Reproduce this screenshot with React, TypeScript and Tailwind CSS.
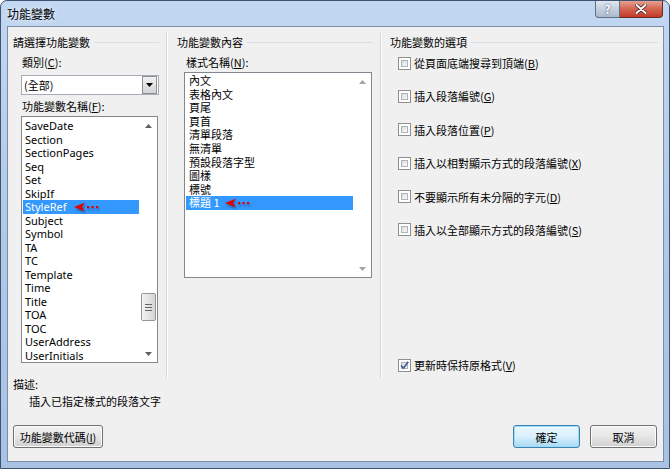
import React from "react";

const fields = [
  "SaveDate",
  "Section",
  "SectionPages",
  "Seq",
  "Set",
  "SkipIf",
  "StyleRef",
  "Subject",
  "Symbol",
  "TA",
  "TC",
  "Template",
  "Time",
  "Title",
  "TOA",
  "TOC",
  "UserAddress",
  "UserInitials",
];

const styleNames = ["內文", "表格內文", "頁尾", "頁首", "清單段落", "無清單", "預設段落字型", "圖樣", "標號", "標題 1"];

const options = [
  { label: "從頁面底端搜尋到頂端", key: "B" },
  { label: "插入段落編號", key: "G" },
  { label: "插入段落位置", key: "P" },
  { label: "插入以相對顯示方式的段落編號", key: "X" },
  { label: "不要顯示所有未分隔的字元", key: "D" },
  { label: "插入以全部顯示方式的段落編號", key: "S" },
];

function RedArrow() {
  return (
    <svg width="26" height="12" viewBox="0 0 26 12" className="drop-shadow-[1px_2px_1px_rgba(0,0,0,0.35)]">
      <path d="M0 6 L11 1.5 L8 6 L11 10.5 Z" fill="#e50000" />
      <rect x="13" y="5" width="2.2" height="2.2" fill="#e50000" />
      <rect x="17.5" y="5" width="2.2" height="2.2" fill="#e50000" />
      <rect x="22" y="5" width="2.2" height="2.2" fill="#e50000" />
    </svg>
  );
}

function ScrollArrow({ up, color }: { up?: boolean; color: string }) {
  return (
    <svg width="7" height="4" viewBox="0 0 7 4">
      <path d={up ? "M0 4 L3.5 0 L7 4 Z" : "M0 0 L7 0 L3.5 4 Z"} fill={color} />
    </svg>
  );
}

function Checkbox({ checked }: { checked?: boolean }) {
  return (
    <div className="w-[13px] h-[13px] border border-[#8e8f8f] bg-white p-[2px] shrink-0">
      <div className="w-full h-full border border-[#aeb3b9] bg-linear-to-br from-[#dcdcdc] to-[#fafafa] relative">
        {checked && (
          <svg width="11" height="11" viewBox="0 0 11 11" className="absolute -left-[3px] -top-[3px]">
            <path d="M2 5.5 L4.5 8.2 L9.2 1.8" fill="none" stroke="#4a5f97" strokeWidth="1.8" />
          </svg>
        )}
      </div>
    </div>
  );
}

function Button({ children, primary, width }: { children: React.ReactNode; primary?: boolean; width: string }) {
  return (
    <button
      className={
        primary
          ? "h-[23px] w-[67px] rounded-[3px] border border-[#3c7fb1] bg-linear-to-b from-[#eaf6fd] via-[#d9f0fc] to-[#a7d9f5] shadow-[inset_0_0_0_1px_#9edcf8] text-[11px] leading-[14px]"
          : width === "wide"
          ? "h-[23px] w-[90px] rounded-[3px] border border-[#707070] bg-linear-to-b from-[#f2f2f2] via-[#e6e6e6] to-[#cfcfcf] shadow-[inset_0_0_0_1px_#fbfbfb] text-[11px] leading-[14px]"
          : "h-[23px] w-[67px] rounded-[3px] border border-[#707070] bg-linear-to-b from-[#f2f2f2] via-[#e6e6e6] to-[#cfcfcf] shadow-[inset_0_0_0_1px_#fbfbfb] text-[11px] leading-[14px]"
      }
    >
      {children}
    </button>
  );
}

function GroupHeader({ title, pad }: { title: string; pad: string }) {
  return (
    <div className={"flex items-center h-[14px] " + pad}>
      <span className="leading-[14px] whitespace-nowrap">{title}</span>
      <div className="flex-1 h-px bg-[#d5dfe5] ml-[4px]" />
    </div>
  );
}

export default function App() {
  return (
    <div className="w-[670px] h-[469px] bg-white font-['Noto_Sans_CJK_TC',sans-serif] text-[11px] text-black overflow-hidden">
      <div className="w-full h-full flex flex-col rounded-t-[7px] border border-[#3f5371] bg-linear-to-b from-[#c2d7f1] via-[#b0c9e9] to-[#a9c2e4]">
        {/* Title bar */}
        <div className="h-[25px] shrink-0 flex items-start">
          <div className="pl-[6px] pt-[5px] text-[12px] leading-[16px] [text-shadow:0_0_6px_#ffffff]">功能變數</div>
          <div className="ml-auto mr-[6px] flex">
            <div className="w-[25px] h-[17px] rounded-bl-[4px] border border-t-0 border-[#5f6f86] bg-linear-to-b from-[#dfe7f1] to-[#aab9cd] flex items-center justify-center text-white font-bold text-[12px] leading-none [text-shadow:0_0_2px_#34435a]">
              ?
            </div>
            <div className="w-[43px] h-[17px] rounded-br-[4px] border border-l-0 border-t-0 border-[#6b2a24] bg-linear-to-b from-[#e6a192] via-[#d3634f] to-[#c23b25] flex items-center justify-center">
              <svg width="12" height="10" viewBox="0 0 12 10">
                <path d="M1.5 1 L10.5 9 M10.5 1 L1.5 9" stroke="#3b1a17" strokeWidth="3.4" strokeLinecap="round" />
                <path d="M1.5 1 L10.5 9 M10.5 1 L1.5 9" stroke="#ffffff" strokeWidth="2" strokeLinecap="round" />
              </svg>
            </div>
          </div>
        </div>

        {/* Client area */}
        <div className="ml-[6px] mr-[5px] mb-[6px] flex-1 border border-[#7c8ea8] bg-[#f0f0f0] flex flex-col">
          <div className="pt-[6px] flex h-[351px]">
            {/* Left column */}
            <div className="w-[158px] pt-[2px] flex flex-col">
              <GroupHeader title="請選擇功能變數" pad="pl-[5px] pr-[7px]" />
              <div className="pl-[14px] mt-[6px] leading-[14px]">
                類別(<span className="underline">C</span>):
              </div>
              <div className="ml-[13px] mt-[6px] w-[138px] h-[20px] border border-[#a5acb5] bg-white flex items-center">
                <span className="pl-[2px] flex-1 leading-[14px]">(全部)</span>
                <div className="w-[15px] h-[18px] mr-px border border-[#8e8f8f] bg-linear-to-b from-[#f2f2f2] to-[#d4d4d4] flex items-center justify-center">
                  <ScrollArrow color="#000000" />
                </div>
              </div>
              <div className="pl-[14px] mt-[4px] leading-[14px]">
                功能變數名稱(<span className="underline">F</span>):
              </div>
              <div className="ml-[13px] mt-[3px] w-[137px] h-[247px] border border-[#828790] bg-white flex">
                <div className="flex-1 pt-[2px] px-px font-['Noto_Sans','Noto_Sans_CJK_TC',sans-serif]">
                  {fields.map((f, i) => (
                    <div
                      key={f}
                      className={
                        i === 6
                          ? "relative h-[13.5px] leading-[13.5px] pl-[2px] bg-[#3399ff] text-white"
                          : "relative h-[13.5px] leading-[13.5px] pl-[2px]"
                      }
                    >
                      {f}
                      {i === 6 && (
                        <div className="absolute left-[51px] top-[1px]">
                          <RedArrow />
                        </div>
                      )}
                    </div>
                  ))}
                </div>
                <div className="w-[17px] flex flex-col">
                  <div className="h-[17px] flex items-center justify-center">
                    <ScrollArrow up color="#606060" />
                  </div>
                  <div className="flex-1 flex flex-col px-px">
                    <div className="h-[159px]" />
                    <div className="h-[28px] rounded-[2px] border border-[#959595] bg-linear-to-r from-[#f3f3f3] to-[#d5d5d5] flex flex-col items-center justify-center gap-[2px]">
                      <div className="w-[7px] h-px bg-[#666666]" />
                      <div className="w-[7px] h-px bg-[#666666]" />
                      <div className="w-[7px] h-px bg-[#666666]" />
                    </div>
                  </div>
                  <div className="h-[17px] flex items-center justify-center">
                    <ScrollArrow color="#606060" />
                  </div>
                </div>
              </div>
            </div>

            <div className="w-px h-[345px] bg-[#d5d5d5]" />
            <div className="w-px h-[345px] bg-white" />

            {/* Middle column */}
            <div className="w-[212px] pt-[2px] flex flex-col">
              <GroupHeader title="功能變數內容" pad="pl-[9px] pr-[7px]" />
              <div className="pl-[18px] mt-[6px] leading-[14px]">
                樣式名稱(<span className="underline">N</span>):
              </div>
              <div className="ml-[16px] mt-[3px] w-[188px] h-[206px] border border-[#828790] bg-white flex">
                <div className="flex-1 pt-px px-px">
                  {styleNames.map((s, i) => (
                    <div
                      key={s}
                      className={
                        i === 9
                          ? "relative h-[13.6px] leading-[13.6px] pl-[3px] bg-[#3399ff] text-white"
                          : "relative h-[13.6px] leading-[13.6px] pl-[3px]"
                      }
                    >
                      {s}
                      {i === 9 && (
                        <div className="absolute left-[39px] top-[1px]">
                          <RedArrow />
                        </div>
                      )}
                    </div>
                  ))}
                </div>
                <div className="w-[17px] flex flex-col justify-between">
                  <div className="h-[17px] flex items-center justify-center">
                    <ScrollArrow up color="#a3a3a3" />
                  </div>
                  <div className="h-[17px] flex items-center justify-center">
                    <ScrollArrow color="#a3a3a3" />
                  </div>
                </div>
              </div>
            </div>

            <div className="w-px h-[345px] bg-[#d5d5d5]" />
            <div className="w-px h-[345px] bg-white" />

            {/* Right column */}
            <div className="flex-1 pt-[2px] h-[345px] flex flex-col">
              <GroupHeader title="功能變數的選項" pad="pl-[8px] pr-[5px]" />
              <div className="pl-[16px] mt-[7px] flex flex-col gap-[19.4px]">
                {options.map((o) => (
                  <div key={o.key} className="flex items-center gap-[3px] h-[14px]">
                    <Checkbox />
                    <span className="leading-[14px]">
                      {o.label}(<span className="underline">{o.key}</span>)
                    </span>
                  </div>
                ))}
              </div>
              <div className="mt-auto mb-[6px] pl-[16px] flex items-center gap-[3px] h-[14px]">
                <Checkbox checked />
                <span className="leading-[14px]">
                  更新時保持原格式(<span className="underline">V</span>)
                </span>
              </div>
            </div>
          </div>

          {/* Description */}
          <div className="pl-[5px] mt-[-1px] leading-[14px]">描述:</div>
          <div className="pl-[21px] mt-[3px] leading-[14px]">插入已指定樣式的段落文字</div>

          {/* Buttons */}
          <div className="mt-[17px] pl-[5px] pr-[6px] flex">
            <Button width="wide">
              功能變數代碼(<span className="underline">I</span>)
            </Button>
            <div className="ml-auto flex gap-[10px]">
              <Button primary width="">
                確定
              </Button>
              <Button width="">取消</Button>
            </div>
          </div>
        </div>
      </div>
    </div>
  );
}
